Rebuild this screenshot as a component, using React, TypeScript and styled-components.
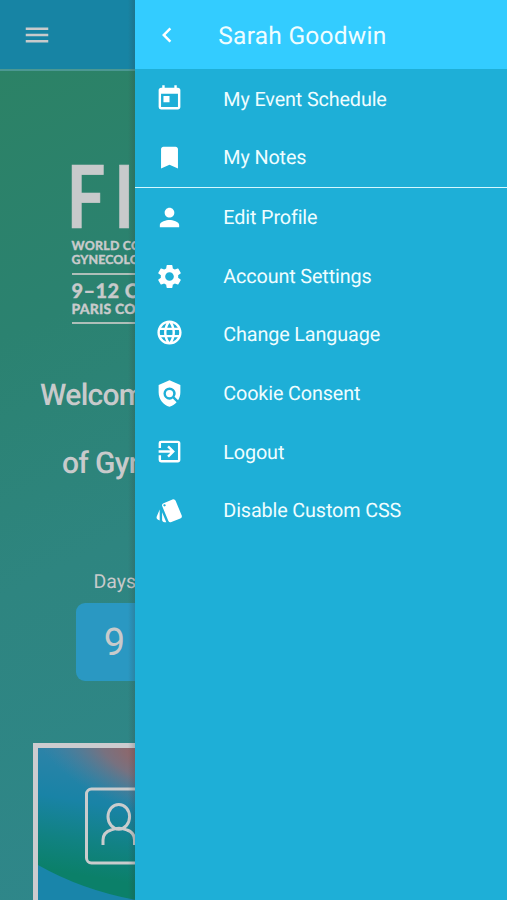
import React from "react";
import styled, { createGlobalStyle } from "styled-components";
import type { IconType } from "react-icons";
import {
  MdBookmark,
  MdChevronLeft,
  MdExitToApp,
  MdLanguage,
  MdMenu,
  MdPerson,
  MdPolicy,
  MdSettings,
  MdStyle,
  MdToday,
} from "react-icons/md";

const GlobalStyle = createGlobalStyle`
  * { box-sizing: border-box; }
  body { margin: 0; font-family: Roboto, sans-serif; text-rendering: geometricPrecision; }
  svg { display: block; flex-shrink: 0; }
`;

const Screen = styled.div`
  display: flex;
  width: 507px;
  height: 900px;
  overflow: hidden;
`;

const Backdrop = styled.main`
  position: relative;
  display: flex;
  flex-direction: column;
  flex: 0 0 135.3px;
  overflow: hidden;
  white-space: nowrap;
  color: #c8cacb;
  background: linear-gradient(155deg, #2c8263 0%, #2b8270 35%, #2e8580 62%, #2f878b 100%);
`;

const DrawerShadow = styled.div`
  position: absolute;
  inset: 0 0 0 auto;
  width: 7px;
  background: linear-gradient(to right, rgba(50, 60, 60, 0), rgba(50, 60, 60, 0.22));
`;

const AppBar = styled.header`
  display: flex;
  align-items: center;
  height: 70.5px;
  padding: 2px 0 0 22px;
  flex-shrink: 0;
  background: #1784a4;
  border-bottom: 2px solid #4b9893;
`;

const Logo = styled.div`
  display: flex;
  flex-direction: column;
  margin: 92px 0 0 71.5px;
  height: 163px;
  flex-shrink: 0;
  font-family: Lato, sans-serif;
  font-weight: 900;
`;

const Acronym = styled.div`
  height: 64px;
  font-size: 87px;
  font-weight: 700;
  line-height: 64px;
  letter-spacing: 11px;
  transform: translate(-5.5px, 0) scaleX(0.79);
  transform-origin: left;
  -webkit-text-stroke: 0.6px #c8cacb;
`;

const LogoLine = styled.div<{ $size: number; $height: number; $spacing?: number }>`
  height: ${(p) => p.$height}px;
  font-size: ${(p) => p.$size}px;
  line-height: ${(p) => p.$height}px;
  letter-spacing: ${(p) => p.$spacing ?? 0}px;
  -webkit-text-stroke: 0.3px #c8cacb;
`;

const LogoRule = styled.div`
  height: 2px;
  flex-shrink: 0;
  background: #aebfb9;
`;

const LogoGap = styled.div<{ $h: number }>`
  height: ${(p) => p.$h}px;
  flex-shrink: 0;
`;

const Welcome = styled.h1`
  margin: 36px 0 0;
  height: 136px;
  flex-shrink: 0;
  font-size: 30px;
  font-weight: 500;
  line-height: 68px;
  letter-spacing: -0.7px;
`;

const WelcomeLine = styled.div<{ $indent: number }>`
  padding-left: ${(p) => p.$indent}px;
`;

const Countdown = styled.section`
  margin: 72.5px 0 0 75.5px;
  flex-shrink: 0;
`;

const Unit = styled.div`
  height: 32.5px;
  padding-left: 18px;
  font-size: 19.5px;
  line-height: 23px;
`;

const Count = styled.div`
  width: 78px;
  height: 78.5px;
  padding-top: 1px;
  border-radius: 9px;
  background: #2a98c2;
  font-size: 38px;
  line-height: 79px;
  text-align: center;
`;

const Tile = styled.section`
  width: 220px;
  height: 220px;
  margin: 62px 0 0 33px;
  flex-shrink: 0;
  border: 5px solid #cccccf;
`;

const Drawer = styled.aside`
  flex: 1;
  color: #effdff;
  background: #1eafd7;
`;

const DrawerHeader = styled.header`
  display: flex;
  align-items: center;
  height: 69.3px;
  padding-left: 17px;
  background: #33ccff;
  svg { color: #fff; }
`;

const UserName = styled.div`
  padding: 2px 0 0 36px;
  font-size: 24.5px;
  line-height: 30px;
  letter-spacing: 0.25px;
`;

const Menu = styled.nav<{ $divided?: boolean }>`
  border-bottom: ${(p) => (p.$divided ? "1.5px solid #d5f8ff" : "none")};
`;

const MenuRow = styled.div`
  display: flex;
  align-items: center;
  height: 58.65px;
  padding-left: 19.5px;
`;

const MenuIcon = styled.span<{ $shift?: number }>`
  width: 68.5px;
  margin-top: ${(p) => (p.$shift ?? 0) * 2}px;
  color: #fff;
`;

const Label = styled.span`
  padding-top: 2.4px;
  font-size: 19.8px;
  line-height: 24px;
  letter-spacing: -0.13px;
`;

type Item = { label: string; icon: IconType; shift?: number };

const eventItems: Item[] = [
  { label: "My Event Schedule", icon: MdToday },
  { label: "My Notes", icon: MdBookmark },
];

const accountItems: Item[] = [
  { label: "Edit Profile", icon: MdPerson, shift: 0.5 },
  { label: "Account Settings", icon: MdSettings, shift: 0.5 },
  { label: "Change Language", icon: MdLanguage, shift: -2 },
  { label: "Cookie Consent", icon: MdPolicy, shift: 0.5 },
  { label: "Logout", icon: MdExitToApp, shift: 0.5 },
  { label: "Disable Custom CSS", icon: MdStyle, shift: 0.5 },
];

function MenuItems({ items, divided }: { items: Item[]; divided?: boolean }) {
  return (
    <Menu $divided={divided}>
      {items.map(({ label, icon: Icon, shift }) => (
        <MenuRow key={label}>
          <MenuIcon $shift={shift}>
            <Icon size={29} />
          </MenuIcon>
          <Label>{label}</Label>
        </MenuRow>
      ))}
    </Menu>
  );
}

function ProfileArtwork() {
  return (
    <svg width="210" height="210" viewBox="0 0 210 210" fill="none">
      <defs>
        <linearGradient id="sea" x1="20" y1="0" x2="0" y2="120" gradientUnits="userSpaceOnUse">
          <stop offset="0" stopColor="#2d83a8" />
          <stop offset="0.4" stopColor="#1983a6" />
          <stop offset="0.72" stopColor="#118283" />
          <stop offset="1" stopColor="#0b8069" />
        </linearGradient>
        <radialGradient id="glow" cx="0" cy="0" r="1" gradientUnits="userSpaceOnUse" gradientTransform="translate(110 8) rotate(22) scale(125 58)">
          <stop offset="0" stopColor="#9b6260" />
          <stop offset="0.4" stopColor="#826f7a" stopOpacity="0.88" />
          <stop offset="1" stopColor="#567f9c" stopOpacity="0" />
        </radialGradient>
      </defs>
      <rect width="210" height="210" fill="url(#sea)" />
      <rect width="210" height="210" fill="url(#glow)" />
      <path d="M0 117Q44 142 98 152V210H0Z" fill="#1985aa" />
      <rect x="48.5" y="41" width="80" height="74" rx="5" stroke="#cacccd" strokeWidth="3" />
      <ellipse cx="80.8" cy="68.8" rx="10.8" ry="12.4" stroke="#cacccd" strokeWidth="3" />
      <path d="M65 97V92Q65 84.5 73 82Q81 78.5 89 82Q96.5 84.5 96.5 92V97" stroke="#cacccd" strokeWidth="3" />
    </svg>
  );
}

export default function App() {
  return (
    <>
      <GlobalStyle />
      <Screen>
        <Backdrop>
          <AppBar>
            <MdMenu size={30} />
          </AppBar>
          <Logo>
            <Acronym>FI</Acronym>
            <LogoGap $h={12} />
            <LogoLine $size={12.4} $height={14.5} $spacing={0.25}>WORLD CO</LogoLine>
            <LogoLine $size={12.4} $height={14.5} $spacing={0.1}>GYNECOLO</LogoLine>
            <LogoGap $h={5.5} />
            <LogoRule />
            <LogoGap $h={6} />
            <LogoLine $size={20} $height={20} $spacing={0.4}>9–12 O</LogoLine>
            <LogoLine $size={14} $height={15} $spacing={0.2}>PARIS CO</LogoLine>
            <LogoGap $h={6} />
            <LogoRule />
          </Logo>
          <Welcome>
            <WelcomeLine $indent={40}>Welcom</WelcomeLine>
            <WelcomeLine $indent={62}>of Gyn</WelcomeLine>
          </Welcome>
          <Countdown>
            <Unit>Days</Unit>
            <Count>9</Count>
          </Countdown>
          <Tile>
            <ProfileArtwork />
          </Tile>
          <DrawerShadow />
        </Backdrop>
        <Drawer>
          <DrawerHeader>
            <MdChevronLeft size={30} />
            <UserName>Sarah Goodwin</UserName>
          </DrawerHeader>
          <MenuItems items={eventItems} divided />
          <MenuItems items={accountItems} />
        </Drawer>
      </Screen>
    </>
  );
}
